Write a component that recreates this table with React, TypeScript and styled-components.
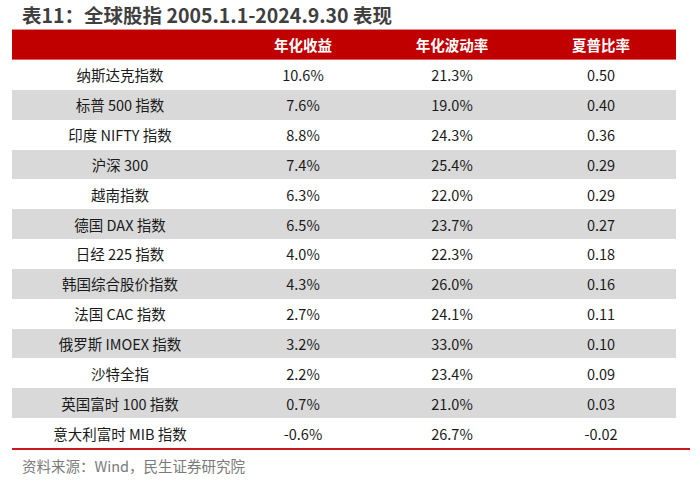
import React from "react";
import styled, { createGlobalStyle } from "styled-components";

const Global = createGlobalStyle`
  html, body { margin: 0; padding: 0; background: #ffffff; }
  body { font-family: "Noto Sans CJK SC", "Noto Sans", sans-serif; }
`;

const Page = styled.div`
  width: 700px;
  height: 482px;
  background: #fff;
  overflow: hidden;
`;

const Title = styled.div`
  height: 29px;
  padding-left: 22px;
  font-size: 19.5px;
  font-weight: 700;
  line-height: 29px;
  color: #3f3f3f;
  white-space: nowrap;
`;

const Table = styled.div`
  margin-left: 12px;
  width: 664px;
  display: grid;
  grid-template-columns: 216px 150px 148px 150px;
`;

const HeaderRow = styled.div`
  display: contents;
`;

const HeadCell = styled.div`
  height: 29px;
  background: #c00000;
  border-top: 1px solid #e58a8a;
  border-bottom: 1px solid #e06060;
  color: #fff;
  font-size: 14.5px;
  font-weight: 700;
  display: flex;
  align-items: center;
  justify-content: center;
`;

const Cell = styled.div<{ $shade: boolean }>`
  height: 29.85px;
  background: ${(p) => (p.$shade ? "#d9d9d9" : "#ffffff")};
  color: #1a1a1a;
  font-size: 14.5px;
  display: flex;
  align-items: center;
  justify-content: center;
  white-space: nowrap;
`;

const BottomRule = styled.div`
  margin-left: 12px;
  width: 678px;
  height: 2px;
  background: #c8191f;
`;

const Source = styled.div`
  padding-left: 22px;
  margin-top: 6px;
  font-size: 14.5px;
  line-height: 20px;
  color: #7a7a7a;
  white-space: nowrap;
`;

const rows: [string, string, string, string][] = [
  ["纳斯达克指数", "10.6%", "21.3%", "0.50"],
  ["标普 500 指数", "7.6%", "19.0%", "0.40"],
  ["印度 NIFTY 指数", "8.8%", "24.3%", "0.36"],
  ["沪深 300", "7.4%", "25.4%", "0.29"],
  ["越南指数", "6.3%", "22.0%", "0.29"],
  ["德国 DAX 指数", "6.5%", "23.7%", "0.27"],
  ["日经 225 指数", "4.0%", "22.3%", "0.18"],
  ["韩国综合股价指数", "4.3%", "26.0%", "0.16"],
  ["法国 CAC 指数", "2.7%", "24.1%", "0.11"],
  ["俄罗斯 IMOEX 指数", "3.2%", "33.0%", "0.10"],
  ["沙特全指", "2.2%", "23.4%", "0.09"],
  ["英国富时 100 指数", "0.7%", "21.0%", "0.03"],
  ["意大利富时 MIB 指数", "-0.6%", "26.7%", "-0.02"],
];

export default function App() {
  return (
    <Page>
      <Global />
      <Title>表11：全球股指 2005.1.1-2024.9.30 表现</Title>
      <Table>
        <HeaderRow>
          <HeadCell />
          <HeadCell>年化收益</HeadCell>
          <HeadCell>年化波动率</HeadCell>
          <HeadCell>夏普比率</HeadCell>
        </HeaderRow>
        {rows.map((r, i) =>
          r.map((v, j) => (
            <Cell key={`${i}-${j}`} $shade={i % 2 === 1}>
              {v}
            </Cell>
          ))
        )}
      </Table>
      <BottomRule />
      <Source>资料来源：Wind，民生证券研究院</Source>
    </Page>
  );
}
